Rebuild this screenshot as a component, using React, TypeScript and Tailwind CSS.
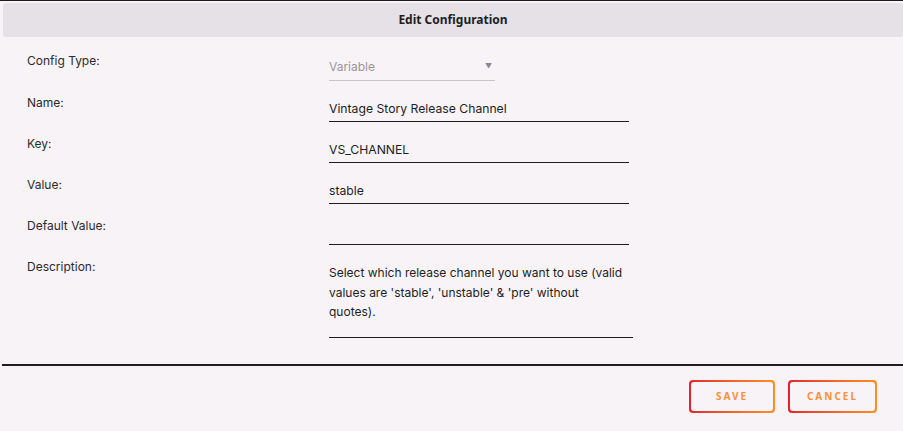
const fields = [
  { label: 'Name:', value: 'Vintage Story Release Channel' },
  { label: 'Key:', value: 'VS_CHANNEL' },
  { label: 'Value:', value: 'stable' },
  { label: 'Default Value:', value: '' },
];

const GradientButton = ({ children, width }: { children: React.ReactNode; width: string }) => (
  <button className={`rounded-[4px] bg-gradient-to-r from-[#e3222c] to-[#ff8f1f] p-[2px] ${width}`}>
    <span className="flex h-[29px] items-center justify-center rounded-[3px] bg-[#f7f3f7] font-['Noto_Sans',sans-serif] text-[10px] font-bold tracking-[0.2em] text-[#f7913a]">
      {children}
    </span>
  </button>
);

const App = () => {
  return (
    <div className="h-[431px] w-[903px] overflow-hidden border-t border-[#1b1b1b] bg-[#f7f3f7] font-['Inter',sans-serif] text-[#2b2b2b]">
      {/* Header */}
      <div className="ml-[3px] mt-[2px] flex h-[34px] items-center justify-center rounded-[3px] bg-[#e6e1e6]">
        <h1 className="font-['Noto_Sans',sans-serif] text-[12px] font-bold text-[#1e1e1e]">Edit Configuration</h1>
      </div>

      {/* Form */}
      <div className="grid grid-cols-[302px_1fr] pl-[27px] pt-[14px]">
        <div className="h-[41px] text-[12px] leading-[20px]">Config Type:</div>
        <div className="h-[41px] pt-[6px]">
          <div className="flex w-[166px] items-center justify-between border-b border-[#c9c6c9] pb-[3px] text-[12px] leading-[20px] text-[#9a979a]">
            <span>Variable</span>
            <span className="mr-[3px] text-[7px] text-[#8a878a]">▼</span>
          </div>
        </div>

        {fields.map((f) => (
          <div key={f.label} className="contents">
            <div className="h-[41px] pt-[1px] text-[12px] leading-[20px]">{f.label}</div>
            <div className="h-[41px] pt-[7px]">
              <div className="h-[23px] w-[300px] border-b border-[#1e1e1e] text-[12.2px] leading-[20px] text-[#1e1e1e]">
                {f.value}
              </div>
            </div>
          </div>
        ))}

        <div className="pt-[1px] text-[12px] leading-[20px]">Description:</div>
        <div className="pt-[7px]">
          <div className="w-[304px] border-b border-[#1e1e1e] pb-[15px] text-[12px] leading-[19.5px] text-[#1e1e1e]">
            Select which release channel you want to use (valid
            <br />
            values are 'stable', 'unstable' &amp; 'pre' without
            <br />
            quotes).
          </div>
        </div>
      </div>

      {/* Footer */}
      <div className="ml-[2px] mt-[26px] border-t-2 border-[#1e1e1e]" />
      <div className="flex justify-end gap-[13px] pr-[26px] pt-[14px]">
        <GradientButton width="w-[86px]">SAVE</GradientButton>
        <GradientButton width="w-[89px]">CANCEL</GradientButton>
      </div>
    </div>
  );
};

export default App;
